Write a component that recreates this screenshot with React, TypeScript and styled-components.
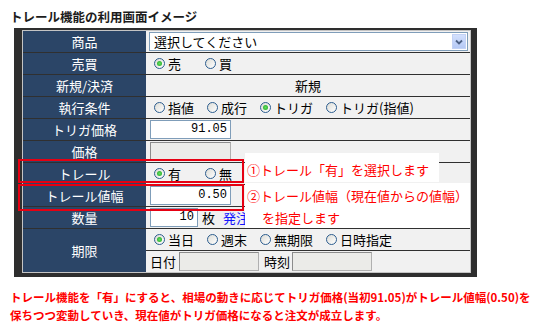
import React from "react";
import styled, { createGlobalStyle } from "styled-components";

const GlobalStyle = createGlobalStyle`
  body {
    margin: 0;
    background: #fff;
    font-family: "Noto Sans CJK JP", "Noto Sans", sans-serif;
  }
`;

const Page = styled.div`
  width: 552px;
  height: 330px;
  padding: 9px 0 0 10px;
  box-sizing: border-box;
  overflow: hidden;
`;

const Title = styled.div`
  font-size: 12.5px;
  font-weight: bold;
  line-height: 16px;
  height: 16px;
  color: #1c1c1c;
  margin-bottom: 3px;
`;

const Frame = styled.div`
  position: relative;
  margin-left: 4px;
  width: fit-content;
  border-style: solid;
  border-color: #2e2e2e;
  border-width: 2px 6px 4px 8px;
`;

const Inner = styled.div`
  border: 1px solid #c4c4c4;
`;

const Table = styled.div`
  display: grid;
  grid-template-columns: 123px 324px;
  grid-auto-rows: 21px;
  row-gap: 1px;
  background: #303030;
`;

const Label = styled.div<{ $span?: number }>`
  grid-row: span ${(p) => p.$span ?? 1};
  background: #2b4567;
  color: #fff;
  font-size: 13px;
  display: flex;
  align-items: center;
  justify-content: center;
`;

const Value = styled.div<{ $center?: boolean; $pad?: number }>`
  background: #f1f1f1;
  color: #000;
  font-size: 13px;
  display: flex;
  align-items: center;
  justify-content: ${(p) => (p.$center ? "center" : "flex-start")};
  padding-left: ${(p) => p.$pad ?? 4}px;
  white-space: nowrap;
`;

const Select = styled.div`
  width: 319px;
  height: 19px;
  box-sizing: border-box;
  border: 1px solid #7f9db9;
  background: #fff;
  display: flex;
  align-items: center;
  justify-content: space-between;
  padding-left: 4px;
  padding-right: 1px;
`;

const DropButton = styled.div`
  width: 14px;
  height: 15px;
  background: linear-gradient(#d3e0fd, #b5c9f5);
  border: 1px solid #c3d2f5;
  box-sizing: border-box;
  display: flex;
  align-items: center;
  justify-content: center;
`;

const TextBox = styled.div<{ $w: number; $disabled?: boolean }>`
  width: ${(p) => p.$w}px;
  height: 19px;
  box-sizing: border-box;
  border: 1px solid ${(p) => (p.$disabled ? "#b0b0b0" : "#7f9db9")};
  border-top-color: ${(p) => (p.$disabled ? "#8c8c8c" : "#7f9db9")};
  border-left-color: ${(p) => (p.$disabled ? "#8c8c8c" : "#7f9db9")};
  background: ${(p) => (p.$disabled ? "#ebebe8" : "#fff")};
  font-family: "Liberation Mono", "DejaVu Sans Mono", monospace;
  font-size: 12px;
  line-height: 17px;
  text-align: right;
  padding-right: 3px;
`;

const RadioItem = styled.span<{ $gap: number }>`
  display: inline-flex;
  align-items: center;
  gap: 3px;
  margin-right: ${(p) => p.$gap}px;
`;

const Dot = styled.span<{ $on?: boolean }>`
  position: relative;
  width: 11px;
  height: 11px;
  box-sizing: border-box;
  border-radius: 50%;
  border: 1px solid #2c5d8f;
  background: linear-gradient(135deg, #dcdcd6, #ffffff);
  &::after {
    content: "";
    display: ${(p) => (p.$on ? "block" : "none")};
    position: absolute;
    left: 2px;
    top: 2px;
    width: 5px;
    height: 5px;
    border-radius: 50%;
    background: radial-gradient(circle, #5fe05f, #21a121);
  }
`;

const Unit = styled.span<{ $ml: number; $blue?: boolean }>`
  margin-left: ${(p) => p.$ml}px;
  color: ${(p) => (p.$blue ? "#1515ff" : "#000")};
`;

const RedBox = styled.div<{ $top: number; $h: number }>`
  position: absolute;
  left: -4px;
  top: ${(p) => p.$top}px;
  width: 226px;
  height: ${(p) => p.$h}px;
  box-sizing: border-box;
  border: 2px solid #e60012;
`;

const Note = styled.div<{ $top: number; $w: number; $h: number; $pt: number }>`
  position: absolute;
  left: 223px;
  top: ${(p) => p.$top}px;
  width: ${(p) => p.$w}px;
  height: ${(p) => p.$h}px;
  box-sizing: border-box;
  padding: ${(p) => p.$pt}px 0 0 2px;
  background: #fff;
  color: #ff0000;
  font-size: 13px;
  line-height: 22px;
  white-space: nowrap;
`;

const NoteLine = styled.div<{ $indent?: number }>`
  padding-left: ${(p) => p.$indent ?? 0}px;
`;

const Footer = styled.div`
  margin-top: 11px;
  color: #ff0000;
  font-weight: bold;
  font-size: 11.5px;
  line-height: 18px;
  white-space: nowrap;
`;

type Opt = { text: string; on?: boolean };

const Radios: React.FC<{ items: Opt[]; gap: number }> = ({ items, gap }) => (
  <>
    {items.map((o) => (
      <RadioItem key={o.text} $gap={gap}>
        <Dot $on={o.on} />
        {o.text}
      </RadioItem>
    ))}
  </>
);

const App: React.FC = () => {
  return (
    <Page>
      <GlobalStyle />
      <Title>トレール機能の利用画面イメージ</Title>
      <Frame>
        <Inner>
          <Table>
            <Label>商品</Label>
            <Value $pad={3}>
              <Select>
                選択してください
                <DropButton>
                  <svg width="8" height="6" viewBox="0 0 8 6">
                    <path d="M1 1.5 L4 4.5 L7 1.5" fill="none" stroke="#4d6185" strokeWidth="1.8" />
                  </svg>
                </DropButton>
              </Select>
            </Value>

            <Label>売買</Label>
            <Value $pad={8}>
              <Radios gap={24} items={[{ text: "売", on: true }, { text: "買" }]} />
            </Value>

            <Label>新規/決済</Label>
            <Value $center $pad={0}>
              新規
            </Value>

            <Label>執行条件</Label>
            <Value $pad={8}>
              <Radios
                gap={13}
                items={[
                  { text: "指値" },
                  { text: "成行" },
                  { text: "トリガ", on: true },
                  { text: "トリガ(指値)" },
                ]}
              />
            </Value>

            <Label>トリガ価格</Label>
            <Value>
              <TextBox $w={81}>91.05</TextBox>
            </Value>

            <Label>価格</Label>
            <Value>
              <TextBox $w={81} $disabled />
            </Value>

            <Label>トレール</Label>
            <Value $pad={8}>
              <Radios gap={24} items={[{ text: "有", on: true }, { text: "無" }]} />
            </Value>

            <Label>トレール値幅</Label>
            <Value>
              <TextBox $w={81}>0.50</TextBox>
            </Value>

            <Label>数量</Label>
            <Value>
              <TextBox $w={48}>10</TextBox>
              <Unit $ml={4}>枚</Unit>
              <Unit $ml={8} $blue>
                発注
              </Unit>
            </Value>

            <Label $span={2}>期限</Label>
            <Value $pad={8}>
              <Radios
                gap={13}
                items={[
                  { text: "当日", on: true },
                  { text: "週末" },
                  { text: "無期限" },
                  { text: "日時指定" },
                ]}
              />
            </Value>
            <Value>
              日付
              <Unit $ml={3}>
                <TextBox $w={80} $disabled />
              </Unit>
              <Unit $ml={5}>時刻</Unit>
              <Unit $ml={2}>
                <TextBox $w={80} $disabled />
              </Unit>
            </Value>
          </Table>
        </Inner>

        <RedBox $top={129} $h={24} />
        <RedBox $top={154} $h={27} />
        <Note $top={123} $w={194} $h={29} $pt={6}>
          ①トレール「有」を選択します
        </Note>
        <Note $top={153} $w={225} $h={45} $pt={2}>
          <NoteLine>②トレール値幅（現在値からの値幅）</NoteLine>
          <NoteLine $indent={15}>を指定します</NoteLine>
        </Note>
      </Frame>
      <Footer>
        トレール機能を「有」にすると、相場の動きに応じてトリガ価格(当初91.05)がトレール値幅(0.50)を
        <br />
        保ちつつ変動していき、現在値がトリガ価格になると注文が成立します。
      </Footer>
    </Page>
  );
};

export default App;
